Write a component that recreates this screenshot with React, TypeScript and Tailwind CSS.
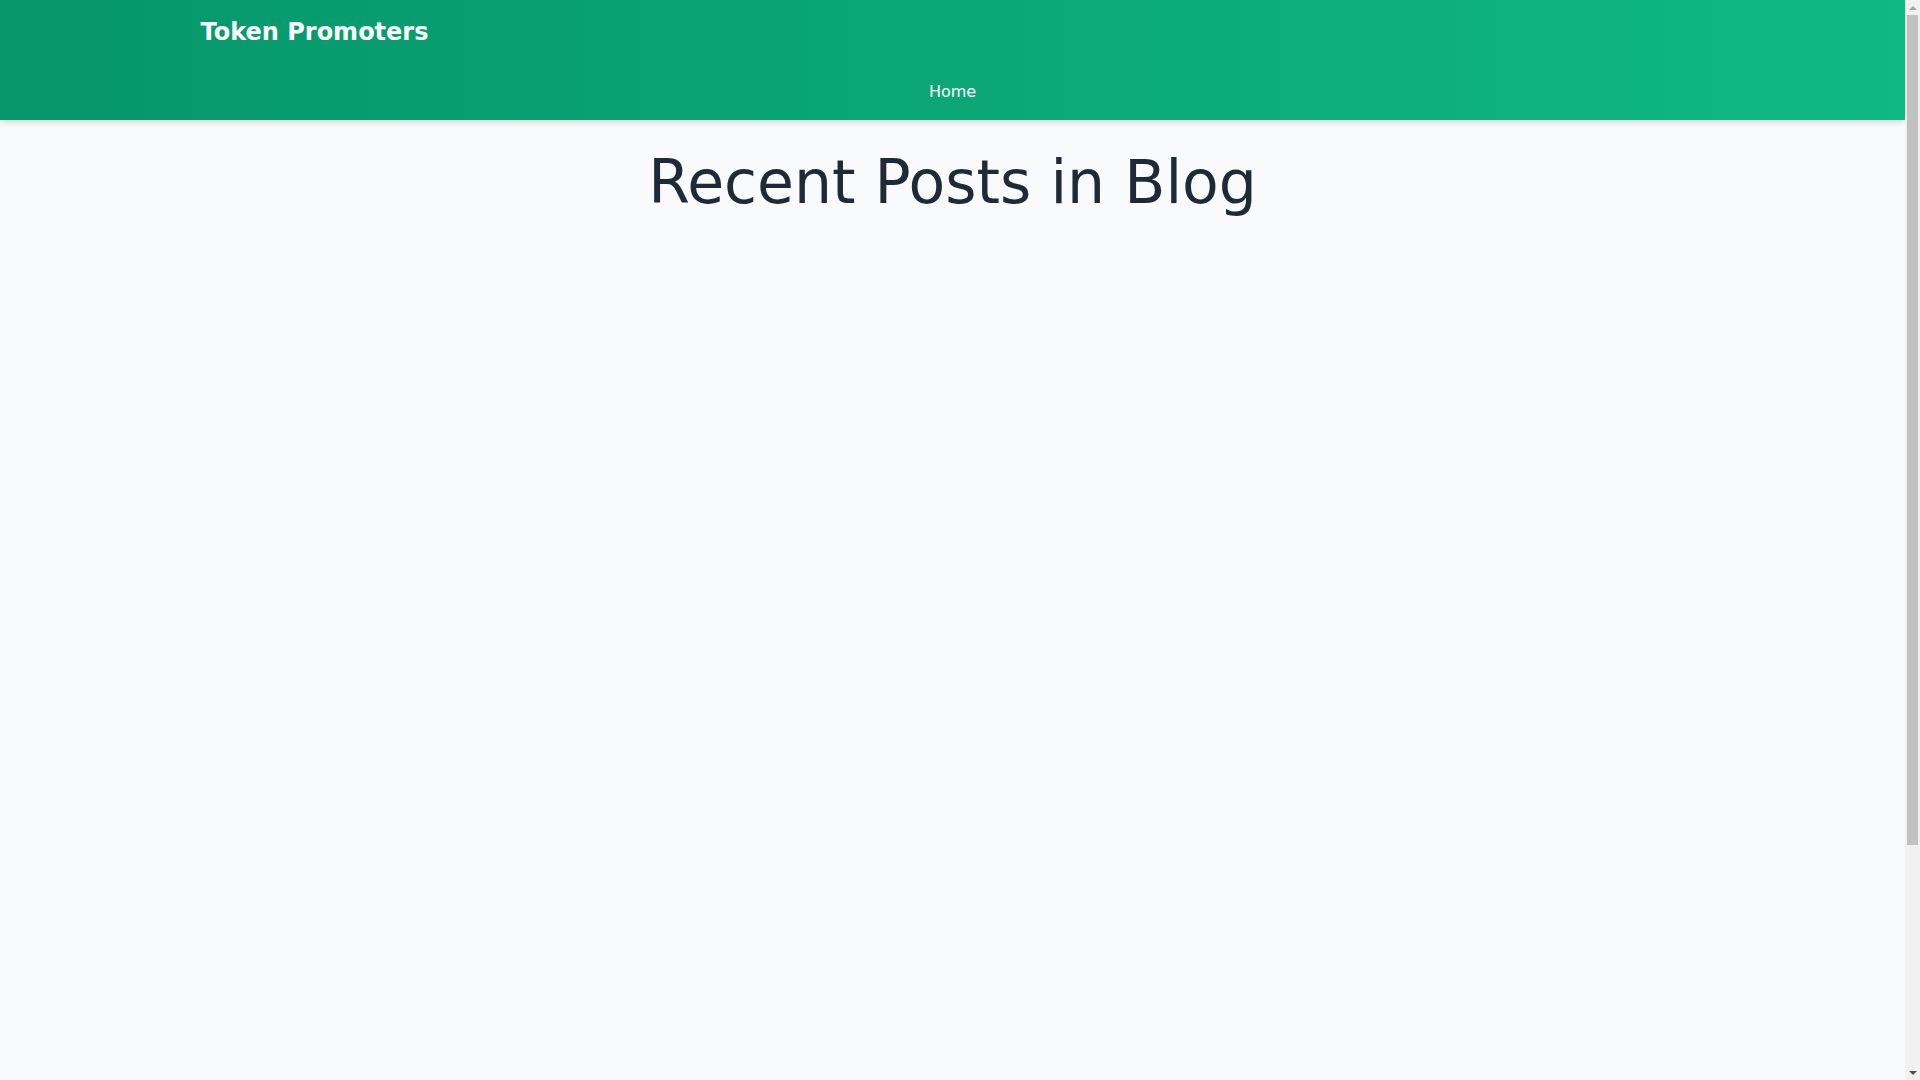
export default function App() {
  return (
    <div className="flex h-screen overflow-hidden bg-[#f9fafb] font-['DejaVu_Sans',sans-serif] text-[#1f2937]">
      <div className="min-w-0 flex-1">
        {/* Header */}
        <header className="bg-gradient-to-r from-[#059669] to-[#10b981] shadow-md">
          <div className="container mx-auto px-4">
            <div className="py-4">
              <h1 className="text-2xl font-bold text-white">Token Promoters</h1>
            </div>
            <nav className="flex justify-center py-4">
              <a href="#" className="text-base text-white">
                Home
              </a>
            </nav>
          </div>
        </header>

        <main className="container mx-auto min-h-[1246px] px-4 py-8">
          <h2 className="text-center text-6xl text-[#1f2937]">Recent Posts in Blog</h2>
        </main>
      </div>

      {/* scrollbar */}
      <div className="flex w-[15px] shrink-0 flex-col bg-[#f1f1f1]">
        <div className="flex h-[15px] items-center justify-center">
          <div className="h-0 w-0 border-x-[4px] border-b-[4px] border-x-transparent border-b-[#a3a3a3]" />
        </div>
        <div className="mx-[2px] h-[830px] bg-[#c1c1c1]" />
        <div className="flex-1" />
        <div className="flex h-[15px] items-center justify-center">
          <div className="h-0 w-0 border-x-[4px] border-t-[4px] border-x-transparent border-t-[#505050]" />
        </div>
      </div>
    </div>
  );
}
